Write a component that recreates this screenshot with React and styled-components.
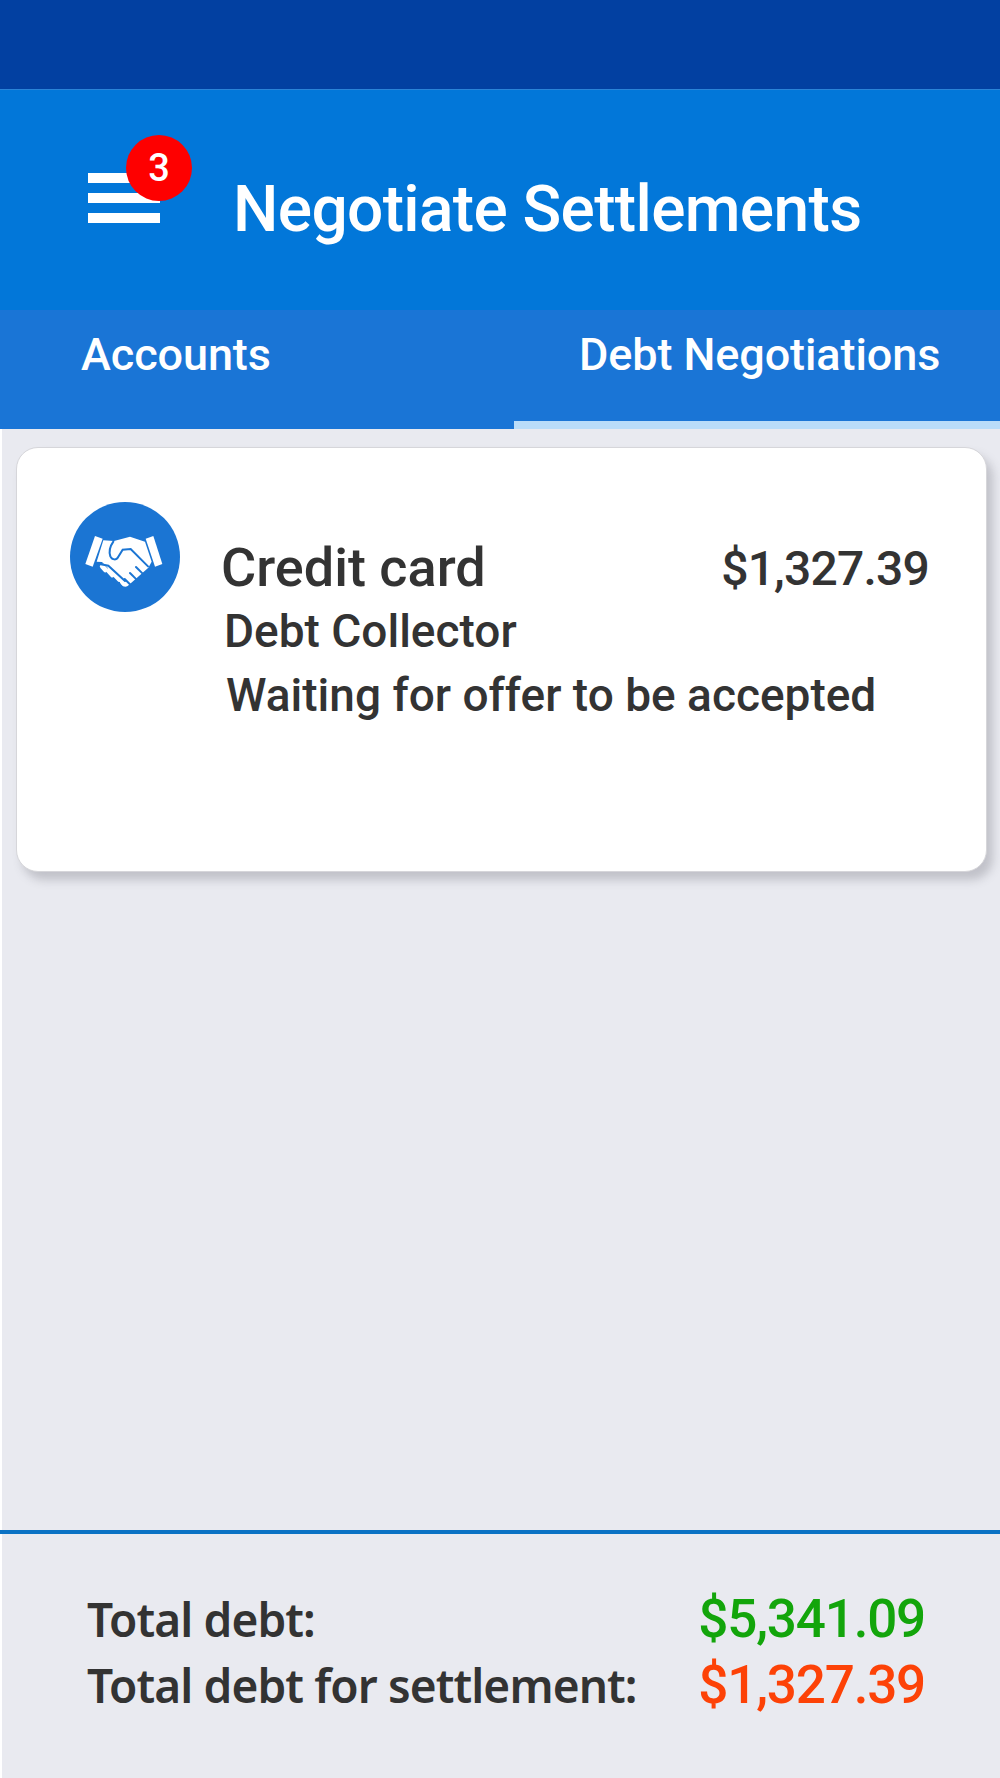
import React from "react"
import styled, { createGlobalStyle } from "styled-components"

const GlobalStyle = createGlobalStyle`
  html, body {
    margin: 0;
    padding: 0;
    background: #fff;
  }
  * {
    box-sizing: border-box;
  }
`

const Page = styled.div`
  width: 1000px;
  height: 1778px;
  display: flex;
  flex-direction: column;
  font-family: Roboto, "Liberation Sans", sans-serif;
  overflow: hidden;
`

const StatusBar = styled.div`
  height: 89px;
  flex: none;
  background: #0240a1;
`

const Header = styled.header`
  height: 221px;
  flex: none;
  display: flex;
  align-items: center;
  padding: 0 0 0 88px;
  background: #0277d9;
  border-top: 1px solid #2a84d8;
`

const MenuButton = styled.div`
  position: relative;
  width: 72px;
  height: 50px;
  margin-top: -4px;
  display: flex;
  flex-direction: column;
  justify-content: space-between;
`

const MenuBar = styled.span`
  display: block;
  height: 10px;
  background: #fff;
`

const Badge = styled.span`
  position: absolute;
  left: 38px;
  top: -38px;
  width: 66px;
  height: 66px;
  border-radius: 50%;
  background: #fe0000;
  color: #fff;
  font-size: 38px;
  font-weight: 500;
  display: flex;
  align-items: center;
  justify-content: center;
`

const Title = styled.h1`
  margin: 18px 0 0 73px;
  color: #fff;
  font-size: 64px;
  font-weight: 500;
  letter-spacing: -0.65px;
  white-space: nowrap;
`

const Tabs = styled.nav`
  height: 119px;
  flex: none;
  display: grid;
  grid-template-columns: 514px 486px;
  background: #1a75d6;
`

const Tab = styled.div`
  display: flex;
  align-items: flex-start;
  padding: 18px 0 0 ${({ $inset }) => $inset}px;
  color: #fff;
  font-size: 45px;
  font-weight: 500;
  letter-spacing: -0.1px;
  border-bottom: 8px solid ${({ $active }) => ($active ? "#b9dcf9" : "transparent")};
`

const Content = styled.main`
  flex: 1;
  display: flex;
  flex-direction: column;
  background: #e9eaf0;
  border-left: 2px solid #fff;
`

const CardArea = styled.div`
  flex: 1;
  padding: 18px 13px 0 14px;
`

const Card = styled.article`
  height: 425px;
  display: flex;
  padding: 54px 57px 0 53px;
  background: #fff;
  border: 1px solid #d6d6da;
  border-radius: 22px;
  box-shadow: 6px 8px 10px rgba(90, 90, 100, 0.28);
`

const IconWrap = styled.div`
  flex: none;
  width: 110px;
  height: 110px;
`

const CardBody = styled.div`
  flex: 1;
  margin-left: 41px;
  padding-top: 35px;
  color: #333;
`

const TitleRow = styled.div`
  display: flex;
  justify-content: space-between;
  align-items: center;
`

const CardTitle = styled.div`
  font-size: 54px;
  font-weight: 500;
  line-height: 62px;
`

const Price = styled.div`
  font-size: 48px;
  font-weight: 500;
  letter-spacing: -0.8px;
`

const CardLine = styled.div`
  font-size: 46px;
  font-weight: 500;
  line-height: 64px;
  margin-left: ${({ $shift }) => $shift}px;
  white-space: nowrap;
`

const Footer = styled.footer`
  height: 248px;
  flex: none;
  margin-left: -2px;
  padding: 52px 75px 0 87px;
  border-top: 4px solid #0b72c4;
`

const TotalRow = styled.div`
  display: flex;
  justify-content: space-between;
  align-items: center;
  height: 66px;
`

const TotalLabel = styled.div`
  font-family: "Noto Sans", "Open Sans", sans-serif;
  font-size: 46px;
  font-weight: 600;
  letter-spacing: -0.9px;
  color: #333;
  white-space: nowrap;
`

const TotalValue = styled.div`
  font-size: 53px;
  font-weight: 500;
  letter-spacing: -1.2px;
  color: ${({ $color }) => $color};
`

const HandshakeIcon = () => (
  <svg width="110" height="110" viewBox="-30 -69 330 330" aria-hidden="true">
    <circle cx="135" cy="96" r="165" fill="#1b75d3" />
    <g fill="#fff">
      <path d="M45 33l23 8-30 84-22-8z" />
      <path d="M197 41l23-8 27 84-22 8z" />
      <path d="M70 46l32 2 48-13 45 15 20 60-10 18-62 55q-10 6-18-4l-15-22-44-46-16-1z" />
      <rect x="58" y="122" width="28" height="15" rx="7" transform="rotate(48 72 129)" />
      <rect x="76" y="136" width="32" height="15" rx="7" transform="rotate(48 92 143)" />
      <rect x="98" y="150" width="30" height="15" rx="7" transform="rotate(48 113 157)" />
      <rect x="118" y="166" width="22" height="14" rx="7" transform="rotate(48 129 173)" />
    </g>
    <g stroke="#1b75d3" strokeWidth="6" fill="none" strokeLinecap="round">
      <path d="M100 50c-10 14-13 32-9 44 6 12 18 12 24 1l13-21 24-2 52 52" />
      <path d="M188 146l-20-20" />
      <path d="M170 164l-20-20" />
      <path d="M152 180l-18-18" />
      <path d="M55 116l30 6 50 46" />
    </g>
  </svg>
)

const App = () => (
  <Page>
    <GlobalStyle />
    <StatusBar />
    <Header>
      <MenuButton>
        <MenuBar />
        <MenuBar />
        <MenuBar />
        <Badge>3</Badge>
      </MenuButton>
      <Title>Negotiate Settlements</Title>
    </Header>
    <Tabs>
      <Tab $inset={81}>Accounts</Tab>
      <Tab $inset={65} $active>Debt Negotiations</Tab>
    </Tabs>
    <Content>
      <CardArea>
        <Card>
          <IconWrap>
            <HandshakeIcon />
          </IconWrap>
          <CardBody>
            <TitleRow>
              <CardTitle>Credit card</CardTitle>
              <Price>$1,327.39</Price>
            </TitleRow>
            <CardLine $shift={3}>Debt Collector</CardLine>
            <CardLine $shift={5}>Waiting for offer to be accepted</CardLine>
          </CardBody>
        </Card>
      </CardArea>
      <Footer>
        <TotalRow>
          <TotalLabel>Total debt:</TotalLabel>
          <TotalValue $color="#13a50b">$5,341.09</TotalValue>
        </TotalRow>
        <TotalRow>
          <TotalLabel>Total debt for settlement:</TotalLabel>
          <TotalValue $color="#fd4207">$1,327.39</TotalValue>
        </TotalRow>
      </Footer>
    </Content>
  </Page>
)

export default App
